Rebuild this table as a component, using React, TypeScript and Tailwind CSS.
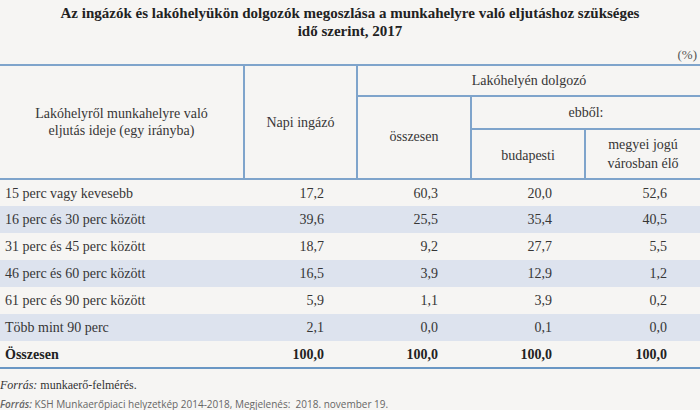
const rows: { label: string; vals: string[] }[] = [
  { label: "15 perc vagy kevesebb", vals: ["17,2", "60,3", "20,0", "52,6"] },
  { label: "16 perc és 30 perc között", vals: ["39,6", "25,5", "35,4", "40,5"] },
  { label: "31 perc és 45 perc között", vals: ["18,7", "9,2", "27,7", "5,5"] },
  { label: "46 perc és 60 perc között", vals: ["16,5", "3,9", "12,9", "1,2"] },
  { label: "61 perc és 90 perc között", vals: ["5,9", "1,1", "3,9", "0,2"] },
  { label: "Több mint 90 perc", vals: ["2,1", "0,0", "0,1", "0,0"] },
];

const line = "border-[#7fa4cb]";

export default function App() {
  return (
    <div className="w-[700px] h-[410px] overflow-hidden bg-[#f6f5f3] text-[#363636] [font-family:Liberation_Serif,serif]">
      <h1 className="pt-[4px] text-center text-[15px] leading-[18px] font-bold text-[#222]">
        Az ingázók és lakóhelyükön dolgozók megoszlása a munkahelyre való eljutáshoz szükséges
        <br />
        idő szerint, 2017
      </h1>
      <div className="mt-[6px] h-[18px] pr-[3px] text-right text-[13px] leading-[18px] text-[#555]">(%)</div>
      <table className="w-[700px] table-fixed border-collapse [font-family:Liberation_Serif,serif] text-[14px] leading-[17px] text-[#363636]">
        <colgroup>
          <col className="w-[244px]" />
          <col className="w-[113px]" />
          <col className="w-[114px]" />
          <col className="w-[114px]" />
          <col className="w-[115px]" />
        </colgroup>
        <thead>
          <tr className="h-[31px]">
            <th rowSpan={3} className={`border-t-2 border-r-2 border-b-2 ${line} font-normal text-center px-2`}>
              Lakóhelyről munkahelyre való
              <br />
              eljutás ideje (egy irányba)
            </th>
            <th rowSpan={3} className={`border-t-2 border-r-2 border-b-2 ${line} font-normal text-center`}>
              Napi ingázó
            </th>
            <th colSpan={3} className={`border-t-2 border-b-2 ${line} font-normal text-center`}>
              Lakóhelyén dolgozó
            </th>
          </tr>
          <tr className="h-[33px]">
            <th rowSpan={2} className={`border-r-2 border-b-2 ${line} font-normal text-center pb-[3px]`}>
              összesen
            </th>
            <th colSpan={2} className={`border-b-2 ${line} font-normal text-center`}>
              ebből:
            </th>
          </tr>
          <tr className="h-[50px]">
            <th className={`border-r-2 border-b-2 ${line} font-normal text-center pt-[3px]`}>budapesti</th>
            <th className={`border-b-2 ${line} font-normal text-center leading-[19px]`}>
              megyei jogú
              <br />
              városban élő
            </th>
          </tr>
        </thead>
        <tbody>
          {rows.map((r, i) => (
            <tr key={r.label} className={`h-[27px] ${i % 2 === 1 ? "bg-[#dde3ee]" : ""}`}>
              <td className="pl-[5px]">{r.label}</td>
              {r.vals.map((v, j) => (
                <td key={j} className="text-right pr-[33px]">
                  {v}
                </td>
              ))}
            </tr>
          ))}
          <tr className="h-[27px] border-b-2 border-[#6a97c4] font-bold text-[#222]">
            <td className="pl-[5px]">Összesen</td>
            <td className="text-right pr-[33px]">100,0</td>
            <td className="text-right pr-[33px]">100,0</td>
            <td className="text-right pr-[33px]">100,0</td>
            <td className="text-right pr-[33px]">100,0</td>
          </tr>
        </tbody>
      </table>
      <div className="mt-[8px] text-[12px] leading-[16px] text-[#333]">
        <i>Forrás:</i> munkaerő-felmérés.
      </div>
      <div className="mt-[4px] [font-family:Open_Sans,sans-serif] text-[10px] leading-[14px] text-[#666]">
        <b className="italic font-semibold">Forrás:</b> KSH Munkaerőpiaci helyzetkép 2014-2018, Megjelenés:&nbsp; 2018. november 19.
      </div>
    </div>
  );
}
